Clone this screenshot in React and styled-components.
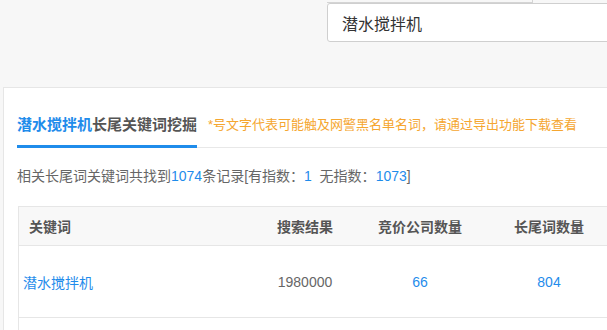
import styled, { createGlobalStyle } from "styled-components";

const GlobalStyle = createGlobalStyle`
    body {
        margin: 0;
        background: #f7f7f7;
        overflow: hidden;
        font-family: "Liberation Sans", "Noto Sans CJK SC", sans-serif;
    }
`

const Page = styled.div`
    width: 607px;
    height: 330px;
    overflow: hidden;
    display: flex;
    flex-direction: column;
`

const SearchArea = styled.div`
    height: 87px;
    flex-shrink: 0;
    padding-left: 327px;
    display: flex;
    flex-direction: column;
    align-items: flex-start;
`

const DropEdge = styled.div`
    width: 205px;
    height: 2px;
    border-right: 1px solid #d4d4d4;
    border-bottom: 1px solid #d4d4d4;
`

const SearchBox = styled.div`
    width: 400px;
    height: 37px;
    box-sizing: content-box;
    border: 1px solid #cfcfcf;
    border-radius: 3px;
    background: #fff;
    padding-left: 14px;
    display: flex;
    align-items: center;
    font-size: 16px;
    color: #333;
`

const Card = styled.section`
    margin-left: 3px;
    width: 900px;
    flex-shrink: 0;
    background: #fff;
    border: 1px solid #e6e6e6;
    border-right: none;
    padding: 0 0 0 13px;
    height: 300px;
`

const TabBar = styled.div`
    display: flex;
    align-items: flex-end;
    padding-top: 27px;
    border-bottom: 1px solid #e8e8e8;
`

const Tab = styled.div`
    font-size: 15px;
    font-weight: bold;
    line-height: 20px;
    color: #555;
    padding-bottom: 10px;
    border-bottom: 3px solid #1f8ceb;
    margin-bottom: -1px;
    span {
        color: #1f8ceb;
    }
`

const Note = styled.div`
    margin-left: 11px;
    font-size: 13px;
    line-height: 20px;
    padding-bottom: 12px;
    color: #f5a630;
`

const Summary = styled.p`
    margin: 18px 0 0;
    font-size: 14px;
    line-height: 20px;
    color: #666;
`

const Num = styled.span`
    color: #1f8ceb;
`

const Table = styled.div`
    margin: 20px 0 0 1px;
    border: 1px solid #e6e6e6;
    border-right: none;
`

const Row = styled.div`
    display: grid;
    grid-template-columns: 228px 116px 114px 144px 200px;
    align-items: center;
    height: ${({ head }) => head ? '38px' : '71px'};
    background: ${({ head }) => head ? '#f8f8f8' : '#fff'};
    font-weight: ${({ head }) => head ? 'bold' : 'normal'};
    color: ${({ head }) => head ? '#555' : '#666'};
    font-size: 14px;
    & + & {
        border-top: 1px solid #e6e6e6;
    }
`

const Cell = styled.div`
    text-align: center;
    color: ${({ link }) => link ? '#1f8ceb' : 'inherit'};
    ${({ first, head }) => first && `
        text-align: left;
        padding-left: ${head ? '10px' : '4px'};
    `}
`

const App = () => {
    return <Page>
        <GlobalStyle />
        <SearchArea>
            <DropEdge />
            <SearchBox>潜水搅拌机</SearchBox>
        </SearchArea>
        <Card>
            <TabBar>
                <Tab><span>潜水搅拌机</span>长尾关键词挖掘</Tab>
                <Note>*号文字代表可能触及网警黑名单名词，请通过导出功能下载查看</Note>
            </TabBar>
            <Summary>
                相关长尾词关键词共找到<Num>1074</Num>条记录[有指数：<Num>1</Num>&nbsp; 无指数：<Num>1073</Num>]
            </Summary>
            <Table>
                <Row head>
                    <Cell first head>关键词</Cell>
                    <Cell>搜索结果</Cell>
                    <Cell>竞价公司数量</Cell>
                    <Cell>长尾词数量</Cell>
                    <Cell />
                </Row>
                <Row>
                    <Cell first link>潜水搅拌机</Cell>
                    <Cell>1980000</Cell>
                    <Cell link>66</Cell>
                    <Cell link>804</Cell>
                    <Cell />
                </Row>
                <Row />
            </Table>
        </Card>
    </Page>
}

export default App;
